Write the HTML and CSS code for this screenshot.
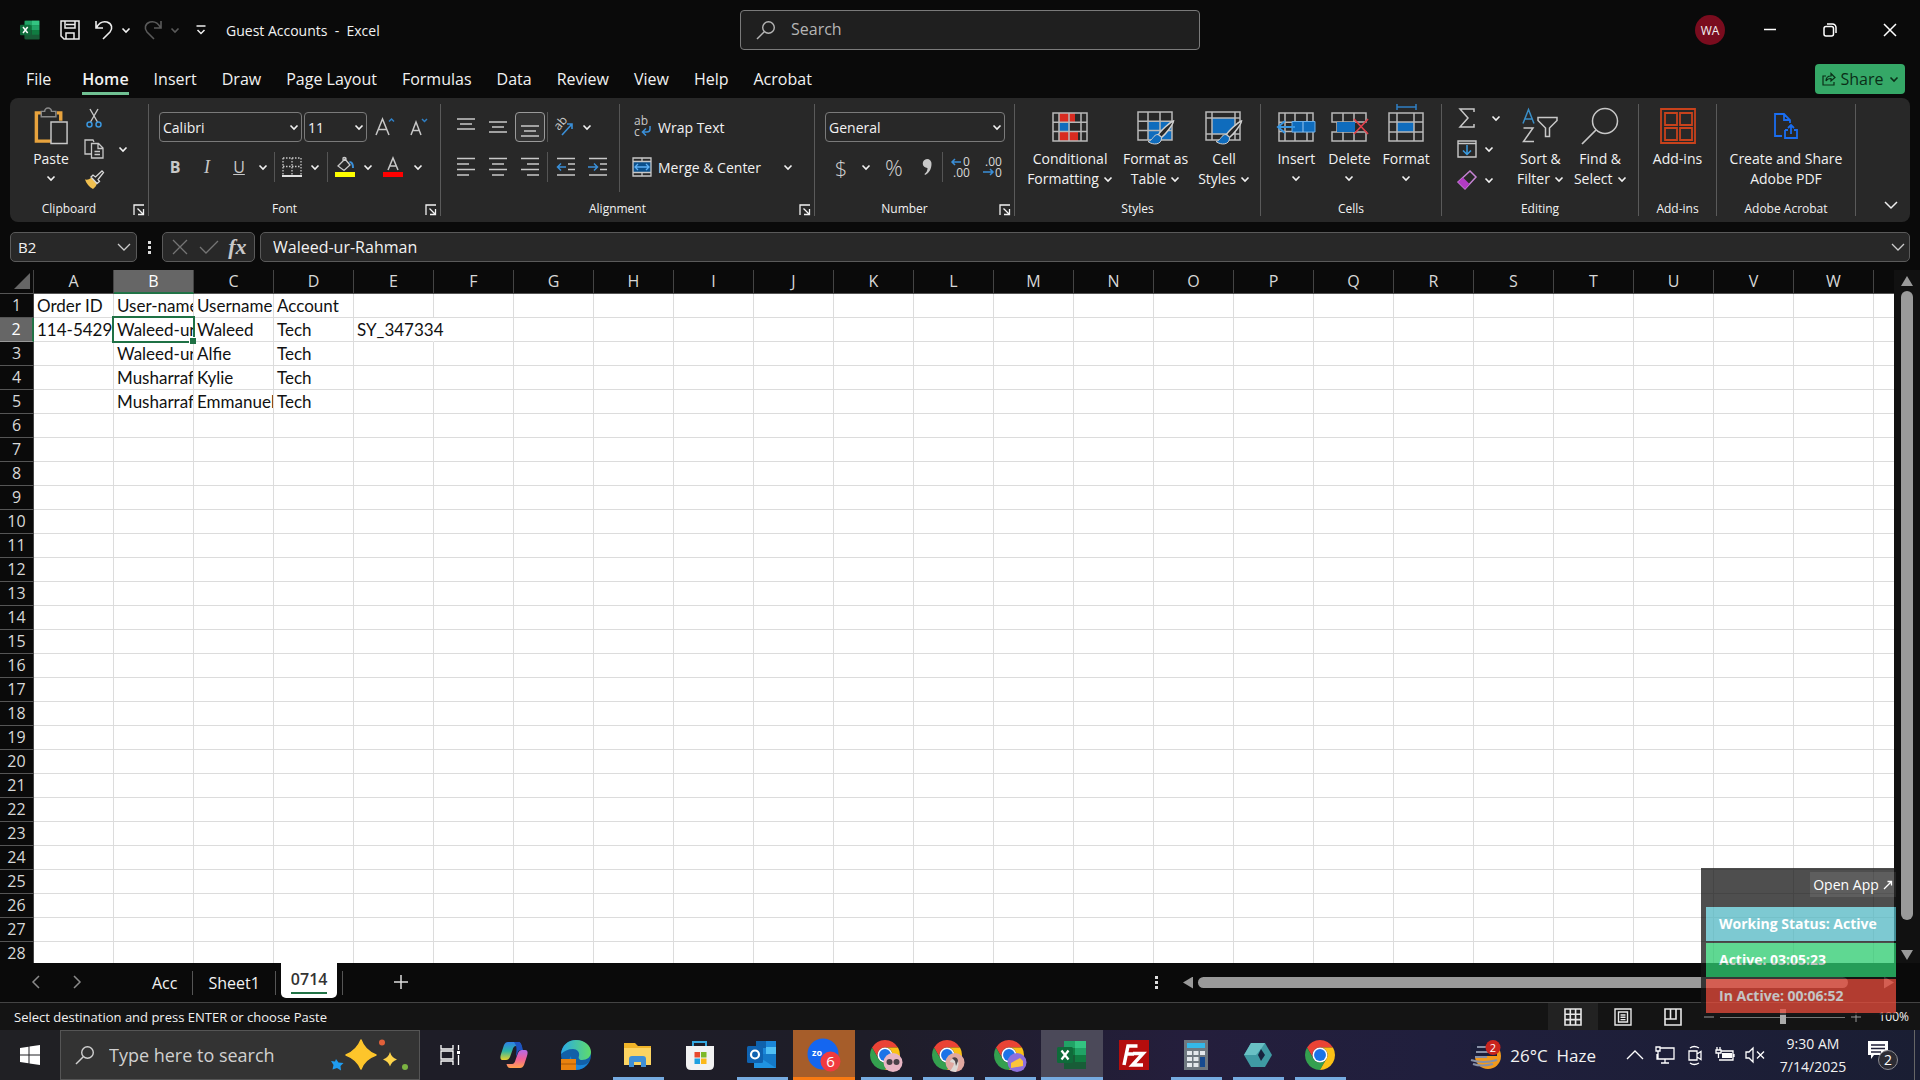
FILE: index.html
```html
<!DOCTYPE html>
<html lang="en">
<head>
<meta charset="utf-8">
<title>Guest Accounts - Excel</title>
<link rel="stylesheet" href="styles.css">
</head>
<body>
<svg class="defs" aria-hidden="true">
  <symbol id="chev" viewBox="0 0 10 10"><path d="M1.500 3.500 5 7l3.500-3.500" fill="none" stroke="currentColor" stroke-width="1.600"/></symbol>
  <symbol id="launch" viewBox="0 0 12 12"><path d="M1 11V1h10M4.500 4.500l5.500 5.500M10.500 5v5.500H5" fill="none" stroke="currentColor" stroke-width="1.300"/></symbol>
  <symbol id="mag" viewBox="0 0 20 20"><circle cx="12.500" cy="7.500" r="5.800" fill="none" stroke="currentColor" stroke-width="1.400"/><path d="M8.300 11.700 1 19" stroke="currentColor" stroke-width="1.500"/></symbol>
  <symbol id="xl" viewBox="0 0 30 30"><path d="M9 1h20v28H9a2 2 0 0 1-2-2V3a2 2 0 0 1 2-2z" fill="#107c41"/><path d="M18 1h11v7H18z" fill="#33c481"/><path d="M7 1h11v7H7zM18 8h11v7H18z" fill="#21a366"/><path d="M18 15h11v7H18z" fill="#107c41"/><path d="M7 15h11v7H7zM7 22h22v7H7z" fill="#185c37"/><rect y="7" width="16" height="16" rx="1.500" fill="#0f6b3a"/><path d="m4.500 10.500 7 9M11.500 10.500l-7 9" stroke="#fff" stroke-width="2.200"/></symbol>
  <symbol id="chrome" viewBox="0 0 48 48"><path d="M3.220 12A24 24 0 0 1 44.780 12H24A12 12 0 0 0 13.600 30Z" fill="#ea4335"/><path d="M3.220 12A24 24 0 0 0 24 48L34.400 30A12 12 0 0 1 13.600 30Z" fill="#34a04f"/><path d="M24 48A24 24 0 0 0 44.780 12H24A12 12 0 0 1 34.400 30Z" fill="#fbc116"/><circle cx="24" cy="24" r="12" fill="#fff"/><circle cx="24" cy="24" r="9.500" fill="#1a73e8"/></symbol>
  <symbol id="grid" viewBox="0 0 36 30"><path d="M1 1h34v28H1zM1 10.300h34M1 19.600h34M7 1v28M17 1v28M29 1v28" fill="none" stroke="#b8b8b8" stroke-width="1.500"/></symbol>
  <symbol id="brush" viewBox="0 0 28 26"><path d="M26.500 1c-4 1.500-13 10-15 13.500l3 3C18.500 14 26 5 26.500 1z" fill="#282828" stroke="#d0d0d0" stroke-width="1.500"/><path d="M11 14.500c-5 0-4.500 5.500-10 7 5 4 14 3.500 13.500-4z" fill="#0f6cbd" stroke="#d0d0d0" stroke-width="1"/></symbol>
</svg>

<header class="titlebar">
  <div class="quick">
    <svg class="s20" viewBox="0 0 30 30"><use href="#xl"/></svg>
    <button class="qsave" aria-label="Save"><svg class="s20" viewBox="0 0 20 20"><path d="M1 1h18v18H4l-3-3zM5 1v7h10V1M6 19v-6h8v6M6 4.500h9" fill="none" stroke="#eee" stroke-width="1.500"/></svg></button>
    <button class="qundo" aria-label="Undo"><svg class="s20" viewBox="0 0 20 20"><path d="M2 1v7h7M2.500 7.500C5 3 9 1 13 2c5 1.500 6 6.500 3 10l-7 7" fill="none" stroke="#eee" stroke-width="1.600"/></svg></button>
    <button class="dd" aria-label="Undo list"><svg><use href="#chev"/></svg></button>
    <button class="qundo dim" aria-label="Redo"><svg class="s20" viewBox="0 0 20 20"><path d="M18 1v7h-7M17.500 7.500C15 3 11 1 7 2 2 3.500 1 8.500 4 12l7 7" fill="none" stroke="currentColor" stroke-width="1.600"/></svg></button>
    <button class="dd dim" aria-label="Redo list"><svg><use href="#chev"/></svg></button>
    <button class="qmore" aria-label="Customize toolbar"><svg class="s12" viewBox="0 0 12 12"><path d="M1.500 2h9M2.500 6l3.500 3.500L9.500 6" fill="none" stroke="#eee" stroke-width="1.500"/></svg></button>
    <span class="doc">Guest Accounts&nbsp; -&nbsp; Excel</span>
  </div>
  <label class="find"><svg class="s20"><use href="#mag"/></svg><input type="text" placeholder="Search" aria-label="Search"></label>
  <div class="winctl">
    <button class="avatar">WA</button>
    <button class="win" aria-label="Minimize"><svg class="s14" viewBox="0 0 14 14"><path d="M1 6.500h12" stroke="#fff" stroke-width="1.500"/></svg></button>
    <button class="win" aria-label="Restore"><svg class="s14" viewBox="0 0 14 14"><rect x="1" y="3.500" width="9.500" height="9.500" rx="2" fill="none" stroke="#fff" stroke-width="1.500"/><path d="M4 1h5.500A3.500 3.500 0 0 1 13 4.500V10" fill="none" stroke="#fff" stroke-width="1.500"/></svg></button>
    <button class="win" aria-label="Close"><svg class="s14" viewBox="0 0 14 14"><path d="m1 1 12 12M13 1 1 13" stroke="#fff" stroke-width="1.500"/></svg></button>
  </div>
</header>

<nav class="tabs">
  <a href="#">File</a><a href="#" class="on">Home</a><a href="#">Insert</a><a href="#">Draw</a><a href="#">Page Layout</a><a href="#">Formulas</a><a href="#">Data</a><a href="#">Review</a><a href="#">View</a><a href="#">Help</a><a href="#">Acrobat</a>
  <button class="share"><svg class="s14" viewBox="0 0 14 14"><path d="M4 4H1v9h11v-3M4 9c0-3 2-5 5-5V1.500L13 5.500 9 9V6.500C7 6.500 5 7 4 9z" fill="none" stroke="#0a2e17" stroke-width="1.200"/></svg>Share<svg class="s10"><use href="#chev"/></svg></button>
</nav>

<section class="ribbon">
  <div class="group clip">
    <div class="body cols">
      <button class="big paste"><svg width="36" height="39" viewBox="0 0 36 39"><path d="M10 6H3v29h16M24 6h4v8" fill="none" stroke="#e8a33d" stroke-width="3.500"/><path d="M8 4.500h3.500a3.500 3.500 0 0 1 7 0H23V10H8z" fill="#282828" stroke="#8a8a8a" stroke-width="1.500"/><path d="M18 15.500h16.500v22H18z" fill="#282828" stroke="#c8c8c8" stroke-width="1.500"/></svg><span>Paste</span><svg class="s10"><use href="#chev"/></svg></button>
      <div class="stack">
        <button aria-label="Cut"><svg class="s20" viewBox="0 0 20 20"><path d="m6 1 7.500 13M14 1 6.500 14" stroke="#c8c8c8" stroke-width="1.400"/><circle cx="5.500" cy="16.500" r="2.500" fill="none" stroke="#3a96dd" stroke-width="1.500"/><circle cx="14.500" cy="16.500" r="2.500" fill="none" stroke="#3a96dd" stroke-width="1.500"/></svg></button>
        <button aria-label="Copy"><svg class="s20" viewBox="0 0 20 20"><path d="M7 15H1V1h8l1 2M7.500 4.500h7l4.500 4.500v10H7.500zM14 5v4.500h5M10.500 12.500h5.500M10.500 15.500h5.500" fill="none" stroke="#c8c8c8" stroke-width="1.300"/></svg></button>
        <button aria-label="Format Painter"><svg class="s20" viewBox="0 0 20 20"><path d="M1 9.500C4 10 6 9 7.500 7.500l5.500 6C12 16 11 17.500 9 19 5 17 2.500 13.500 1 9.500z" fill="#f0c050"/><path d="m7 7 2-2 2.500 2L18 1l1.500 1.500L14 9.500l1.500 2-2.500 2z" fill="#282828" stroke="#d8d8d8" stroke-width="1.300"/></svg></button>
      </div>
      <button class="dd" aria-label="Copy options"><svg><use href="#chev"/></svg></button>
    </div>
    <h2>Clipboard</h2><button class="launch" aria-label="Clipboard settings"><svg class="s12"><use href="#launch"/></svg></button>
  </div>

  <div class="group font">
    <div class="body rows">
      <div class="row near">
        <label class="combo face"><select aria-label="Font"><option>Calibri</option></select><svg class="s10"><use href="#chev"/></svg></label>
        <label class="combo size"><select aria-label="Font size"><option>11</option></select><svg class="s10"><use href="#chev"/></svg></label>
        <button class="ic" aria-label="Increase font size"><svg class="s20" viewBox="0 0 20 20"><path d="m1 18 6.500-16L14 18M3.500 12.500h8" fill="none" stroke="#c8c8c8" stroke-width="1.500"/><path d="m14 4.500 2.500-2.500L19 4.500" fill="none" stroke="#2f7fc4" stroke-width="1.500"/></svg></button>
        <button class="ic" aria-label="Decrease font size"><svg class="s20" viewBox="0 0 20 20"><path d="m2 18 5-13 5 13M4 13.500h6" fill="none" stroke="#c8c8c8" stroke-width="1.500"/><path d="m13 2 2.500 2.500L18 2" fill="none" stroke="#2f7fc4" stroke-width="1.500"/></svg></button>
      </div>
      <div class="row">
        <button class="ic t"><b>B</b></button><button class="ic t"><i>I</i></button><button class="ic t"><u>U</u></button><button class="dd" aria-label="Underline options"><svg><use href="#chev"/></svg></button><span class="sep"></span>
        <button class="ic narrow" aria-label="Borders"><svg class="s20" viewBox="0 0 20 20"><path d="M1 1h18v17M1 1v17M10 1v17M1 9.500h18" fill="none" stroke="#c8c8c8" stroke-width="1.300" stroke-dasharray="1.500 1.500"/><path d="M0 19h20" stroke="#e0e0e0" stroke-width="2"/></svg></button><button class="dd" aria-label="Border options"><svg><use href="#chev"/></svg></button><span class="sep"></span>
        <button class="ic narrow" aria-label="Fill color"><svg class="s20" viewBox="0 0 20 20"><path d="M3 9 10 2l5 6-6 5.500zM8 5V1.500C8 0 11 0 11 1.500V4" fill="none" stroke="#c8c8c8" stroke-width="1.300"/><path d="M14.500 5c3 0 3.500 3 3.500 6" fill="none" stroke="#3a8fd8" stroke-width="2"/><path d="M0 15h20v5H0z" fill="#ff0"/></svg></button><button class="dd" aria-label="Fill options"><svg><use href="#chev"/></svg></button>
        <button class="ic" aria-label="Font color"><svg class="s20" viewBox="0 0 20 20"><path d="m5 13 5-12 5 12M6.800 9h6.400" fill="none" stroke="#c8c8c8" stroke-width="1.500"/><path d="M0 15h20v5H0z" fill="#f00"/></svg></button><button class="dd" aria-label="Font color options"><svg><use href="#chev"/></svg></button>
      </div>
    </div>
    <h2>Font</h2><button class="launch" aria-label="Font settings"><svg class="s12"><use href="#launch"/></svg></button>
  </div>

  <div class="group align">
    <div class="body cols">
      <div class="rows">
        <div class="row">
          <button class="ic" aria-label="Top align"><svg class="s20" viewBox="0 0 20 20"><path d="M1 2h18M4 7h12M1 12h18" stroke="#c8c8c8" stroke-width="1.500"/></svg></button>
          <button class="ic" aria-label="Middle align"><svg class="s20" viewBox="0 0 20 20"><path d="M1 5h18M4 10h12M1 15h18" stroke="#c8c8c8" stroke-width="1.500"/></svg></button>
          <button class="ic pressed" aria-label="Bottom align"><svg class="s20" viewBox="0 0 20 20"><path d="M1 9h18M4 14h12M1 19h18" stroke="#c8c8c8" stroke-width="1.500"/></svg></button><span class="sep thin"></span>
          <button class="ic narrow" aria-label="Orientation"><svg class="s20" viewBox="0 0 20 20"><text x="0" y="0" transform="translate(5 14) rotate(-50)" font-size="12" fill="#c8c8c8">ab</text><path d="M8 18 18 7M13 7h5v5" fill="none" stroke="#3a8fd8" stroke-width="1.600"/></svg></button><button class="dd" aria-label="Orientation options"><svg><use href="#chev"/></svg></button>
        </div>
        <div class="row">
          <button class="ic" aria-label="Align left"><svg class="s20" viewBox="0 0 20 20"><path d="M1 1.500h18M1 7h12M1 12.500h18M1 18h12" stroke="#c8c8c8" stroke-width="1.500"/></svg></button>
          <button class="ic" aria-label="Center"><svg class="s20" viewBox="0 0 20 20"><path d="M1 1.500h18M4 7h12M1 12.500h18M4 18h12" stroke="#c8c8c8" stroke-width="1.500"/></svg></button>
          <button class="ic" aria-label="Align right"><svg class="s20" viewBox="0 0 20 20"><path d="M1 1.500h18M7 7h12M1 12.500h18M7 18h12" stroke="#c8c8c8" stroke-width="1.500"/></svg></button><span class="sep thin"></span>
          <button class="ic" aria-label="Decrease indent"><svg class="s20" viewBox="0 0 20 20"><path d="M1 1.500h18M12 7h7M12 12.500h7M1 18h18" stroke="#c8c8c8" stroke-width="1.500"/><path d="M10 10H2m3-3.500L1.500 10 5 13.500" fill="none" stroke="#3a8fd8" stroke-width="1.500"/></svg></button>
          <button class="ic" aria-label="Increase indent"><svg class="s20" viewBox="0 0 20 20"><path d="M1 1.500h18M12 7h7M12 12.500h7M1 18h18" stroke="#c8c8c8" stroke-width="1.500"/><path d="M0 10h9M6 6.500 9.500 10 6 13.500" fill="none" stroke="#3a8fd8" stroke-width="1.500"/></svg></button>
        </div>
      </div>
      <div class="rows wrapcol">
        <button class="row txt"><svg class="s20" viewBox="0 0 20 20"><text x="2" y="8" font-size="12" fill="#c8c8c8">ab</text><text x="2" y="19" font-size="12" fill="#c8c8c8">c</text><path d="M18 9v3c0 2-1 3-3 3h-4m3-3.500L10.500 15l3.500 3.500" fill="none" stroke="#3a8fd8" stroke-width="1.600"/></svg>Wrap Text</button>
        <div class="row"><button class="txt"><svg class="s20" viewBox="0 0 20 20"><path d="M1 4h18v12H1z" fill="#0b4f8a"/><path d="M1 1h18v18H1zM1 4.500h18M1 15.500h18M10 1v3.500M10 15.500V19" fill="none" stroke="#c8c8c8" stroke-width="1.300"/><path d="M3 10h14M6 7l-3 3 3 3M14 7l3 3-3 3" fill="none" stroke="#5db0f5" stroke-width="1.300"/></svg>Merge &amp; Center</button><button class="dd far" aria-label="Merge options"><svg><use href="#chev"/></svg></button></div>
      </div>
    </div>
    <h2>Alignment</h2><button class="launch" aria-label="Alignment settings"><svg class="s12"><use href="#launch"/></svg></button>
  </div>

  <div class="group number">
    <div class="body rows">
      <div class="row"><label class="combo"><select aria-label="Number format"><option>General</option></select><svg class="s10"><use href="#chev"/></svg></label></div>
      <div class="row">
        <button class="ic g">$</button><button class="dd" aria-label="Currency options"><svg><use href="#chev"/></svg></button><button class="ic g pct">%</button>
        <button class="ic narrow" aria-label="Comma style"><svg class="s20" viewBox="0 0 20 20"><path d="M10 2a4.500 4.500 0 0 1 4.500 5c0 5-2.500 9-6.500 11l-.5-1c2-1.500 3-3.500 3-6A4.500 4.500 0 1 1 10 2z" fill="#c8c8c8"/></svg></button><span class="sep thin"></span>
        <button class="ic" aria-label="Increase decimal"><svg class="s20" viewBox="0 0 20 20"><text x="12" y="9" font-size="12" fill="#d8d8d8">0</text><text x="2" y="20" font-size="12" fill="#d8d8d8">.00</text><path d="M10 5H1m3-3L1 5l3 3" fill="none" stroke="#3a8fd8" stroke-width="1.500"/></svg></button>
        <button class="ic" aria-label="Decrease decimal"><svg class="s20" viewBox="0 0 20 20"><text x="2" y="9" font-size="12" fill="#d8d8d8">.00</text><text x="12" y="20" font-size="12" fill="#d8d8d8">0</text><path d="M0 15h10M7 12l3 3-3 3" fill="none" stroke="#3a8fd8" stroke-width="1.500"/></svg></button>
      </div>
    </div>
    <h2>Number</h2><button class="launch" aria-label="Number settings"><svg class="s12"><use href="#launch"/></svg></button>
  </div>

  <div class="group styles">
    <div class="body cols bigs">
      <button class="big"><svg width="36" height="34" viewBox="0 0 36 34"><g transform="translate(0 3)"><path d="M7 1h16v9H7zM7 20h19v9H7z" fill="#d92b20"/><path d="M7 10h11v10H7z" fill="#0f6cbd"/><use href="#grid" width="36" height="30"/></g></svg><span>Conditional<br>Formatting<svg class="s10"><use href="#chev"/></svg></span></button>
      <button class="big"><svg width="40" height="38" viewBox="0 0 40 38"><g transform="translate(1 4)"><path d="M11 10h24v19H11z" fill="#0f6cbd"/><path d="M1 1h34v28H1zM1 10.300h34M1 19.600h34M11 1v28M23 1v28" fill="none" stroke="#b8b8b8" stroke-width="1.500"/><use href="#brush" x="10" y="9" width="28" height="26"/></g></svg><span>Format as<br>Table<svg class="s10"><use href="#chev"/></svg></span></button>
      <button class="big"><svg width="40" height="38" viewBox="0 0 40 38"><g transform="translate(1 4)"><path d="M7 7h23v16H7z" fill="#0f6cbd"/><path d="M1 1h34v28H1zM1 7h34M1 23h34M7 1v28M30 1v28" fill="none" stroke="#b8b8b8" stroke-width="1.500"/><use href="#brush" x="10" y="9" width="28" height="26"/></g></svg><span>Cell<br>Styles<svg class="s10"><use href="#chev"/></svg></span></button>
    </div>
    <h2>Styles</h2>
  </div>

  <div class="group cells">
    <div class="body cols bigs">
      <button class="big two"><svg width="40" height="34" viewBox="0 0 40 34"><g transform="translate(2 3)"><use href="#grid" width="36" height="30"/><path d="M14 9.500h23v10.500H14z" fill="#0f6cbd" stroke="#6aaee8"/><path d="M25 10v10" stroke="#9cc8f0"/><path d="M17 15H0M7 9l-7 6 7 6" fill="none" stroke="#3a96e0" stroke-width="2"/></g></svg><span>Insert</span><svg class="s10"><use href="#chev"/></svg></button>
      <button class="big two"><svg width="40" height="34" viewBox="0 0 40 34"><g transform="translate(2 3)"><path d="M1 1h34v9H1zM1 20h34v9H1zM12 1v9M23 1v9M12 20v9M23 20v9M1 10h5v10H1" fill="none" stroke="#b8b8b8" stroke-width="1.500"/><path d="M6 10h18v10H6z" fill="#0f6cbd"/><path d="m23 7 14 15M37 7 23 22" stroke="#e0404a" stroke-width="1.700"/></g></svg><span>Delete</span><svg class="s10"><use href="#chev"/></svg></button>
      <button class="big two"><svg width="36" height="38" viewBox="0 0 36 38"><path d="M9 0h19M9-3v6M28-3v6" stroke="#2f7fc4" stroke-width="1.500"/><g transform="translate(0 5)"><path d="M9 10h17v10H9z" fill="#0f6cbd"/><path d="M1 1h34v28H1zM1 10h34M1 20h34M9 1v28M26 1v28" fill="none" stroke="#b8b8b8" stroke-width="1.500"/></g></svg><span>Format</span><svg class="s10"><use href="#chev"/></svg></button>
    </div>
    <h2>Cells</h2>
  </div>

  <div class="group editing">
    <div class="body cols">
      <div class="stack pair">
        <div class="row"><button aria-label="AutoSum"><svg class="s20" viewBox="0 0 20 20"><path d="M17 4V1H3l8 9-8 9h14v-3" fill="none" stroke="#c8c8c8" stroke-width="1.500"/></svg></button><button class="dd wide" aria-label="AutoSum options"><svg><use href="#chev"/></svg></button></div>
        <div class="row"><button aria-label="Fill"><svg class="s20" viewBox="0 0 20 20"><path d="M1 2h18v16H1zM1 4.500h18" fill="none" stroke="#c8c8c8" stroke-width="1.400"/><path d="M10 6v9M6 11.500l4 4 4-4" fill="none" stroke="#3a9be0" stroke-width="1.500"/></svg></button><button class="dd" aria-label="Fill options"><svg><use href="#chev"/></svg></button></div>
        <div class="row"><button aria-label="Clear"><svg class="s20" viewBox="0 0 20 20"><path d="m1 12 12-11 6 6L8 19z" fill="none" stroke="#c583d3" stroke-width="1.500"/><path d="m1 12 5-4.500 6.500 6.500L8 19z" fill="#b23bc4"/></svg></button><button class="dd" aria-label="Clear options"><svg><use href="#chev"/></svg></button></div>
      </div>
      <button class="big"><svg width="36" height="37" viewBox="0 0 36 37"><path d="m1 16 5.500-14L12 16M3 11.500h7" fill="none" stroke="#3a8fc8" stroke-width="1.500"/><path d="M1.500 20.500H11L1.500 34H12" fill="none" stroke="#c8c8c8" stroke-width="1.500"/><path d="M16 10h19v3l-7.500 7.500V29h-4v-8.500L16 13z" fill="none" stroke="#c8c8c8" stroke-width="1.500"/></svg><span>Sort &amp;<br>Filter<svg class="s10"><use href="#chev"/></svg></span></button>
      <button class="big"><svg width="38" height="38" viewBox="0 0 38 38"><circle cx="24" cy="14" r="12.500" fill="none" stroke="#c8c8c8" stroke-width="1.500"/><path d="M15 23 1 37" stroke="#c8c8c8" stroke-width="1.700"/></svg><span>Find &amp;<br>Select<svg class="s10"><use href="#chev"/></svg></span></button>
    </div>
    <h2>Editing</h2>
  </div>

  <div class="group addins">
    <div class="body cols"><button class="big"><svg width="36" height="36" viewBox="0 0 36 36"><path d="M1 1h34v34H1zM5 5h12v12H5zM20 5h12v12H20zM5 20h12v12H5zM20 20h12v12H20z" fill="none" stroke="#c8421c" stroke-width="1.800"/></svg><span>Add-ins</span></button></div>
    <h2>Add-ins</h2>
  </div>

  <div class="group acro">
    <div class="body cols"><button class="big"><svg width="24" height="32" viewBox="0 0 24 32"><path d="M8 26H1V4h9l6 6v3M10 4v6h6M11 20v8h12v-8h-3M14 20h-3M17 24v-9M14 18l3-3 3 3" fill="none" stroke="#1a6df0" stroke-width="1.800"/></svg><span>Create and Share<br>Adobe PDF</span></button></div>
    <h2>Adobe Acrobat</h2>
  </div>
  <button class="collapse" aria-label="Collapse ribbon"><svg class="s14" viewBox="0 0 14 14"><path d="m1 4 6 6 6-6" fill="none" stroke="#eee" stroke-width="1.500"/></svg></button>
</section>

<div class="formula">
  <label class="namebox"><input type="text" value="B2" aria-label="Name box"><svg class="s14" viewBox="0 0 14 14"><path d="m1 4 6 6 6-6" fill="none" stroke="#ccc" stroke-width="1.300"/></svg></label>
  <span class="dots"></span>
  <div class="fx"><button aria-label="Cancel"><svg class="s20" viewBox="0 0 20 20"><path d="m3 3 14 14M17 3 3 17" stroke="#757575" stroke-width="1.300"/></svg></button><button aria-label="Enter"><svg class="s20" viewBox="0 0 20 20"><path d="m1 10 6 6L19 4" fill="none" stroke="#757575" stroke-width="1.300"/></svg></button><button class="fn">fx</button></div>
  <label class="fbar"><input type="text" value="Waleed-ur-Rahman" aria-label="Formula bar"><svg class="s14" viewBox="0 0 14 14"><path d="m1 4 6 6 6-6" fill="none" stroke="#ccc" stroke-width="1.300"/></svg></label>
</div>

<main class="sheet">
  <div class="cellsview"><table class="gridtable"><thead></thead><tbody></tbody></table></div>
  <div class="vscroll"><button class="up" aria-label="Scroll up"></button><div class="track"></div><button class="down" aria-label="Scroll down"></button></div>
</main>

<div class="sheettabs">
  <button class="nav" aria-label="Previous sheet"><svg class="s14" viewBox="0 0 14 14"><path d="M10 1 4 7l6 6" fill="none" stroke="#8a8a8a" stroke-width="1.500"/></svg></button>
  <button class="nav" aria-label="Next sheet"><svg class="s14" viewBox="0 0 14 14"><path d="m4 1 6 6-6 6" fill="none" stroke="#8a8a8a" stroke-width="1.500"/></svg></button>
  <button class="st first">Acc</button><button class="st">Sheet1</button><button class="st active"><span>0714</span></button><i class="bar"></i>
  <button class="add" aria-label="New sheet"><svg class="s14" viewBox="0 0 14 14"><path d="M7 0v14M0 7h14" stroke="#ddd" stroke-width="1.500"/></svg></button>
  <div class="hscroll"><span class="dots"></span><button class="left" aria-label="Scroll left"></button><div class="track"></div><button class="right" aria-label="Scroll right"></button></div>
</div>

<div class="status">
  <span>Select destination and press ENTER or choose Paste</span>
  <div class="views">
    <button class="on" aria-label="Normal"><svg width="18" height="18" viewBox="0 0 18 18"><path d="M1 1h16v16H1zM1 6.300h16M1 11.600h16M6.300 1v16M11.600 1v16" fill="none" stroke="#e8e8e8" stroke-width="1.600"/></svg></button>
    <button aria-label="Page Layout"><svg width="18" height="18" viewBox="0 0 18 18"><path d="M1 1h16v16H1zM4.500 4h9v10h-9zM6.500 7h5M6.500 9.300h5M6.500 11.600h5" fill="none" stroke="#e8e8e8" stroke-width="1.400"/></svg></button>
    <button aria-label="Page Break"><svg width="18" height="18" viewBox="0 0 18 18"><path d="M1 1h16v16H1zM1 11h11V1M6.500 1v10" fill="none" stroke="#e8e8e8" stroke-width="1.600"/></svg></button>
  </div>
  <button class="zb" aria-label="Zoom out"><svg class="s10" viewBox="0 0 10 10"><path d="M0 5h10" stroke="#999"/></svg></button><input class="zoom" type="range" aria-label="Zoom"><button class="zb" aria-label="Zoom in"><svg class="s10" viewBox="0 0 10 10"><path d="M0 5h10M5 0v10" stroke="#999"/></svg></button><span class="pc">100%</span>
</div>

<footer class="taskbar">
  <button class="start" aria-label="Start"><svg class="s20" viewBox="0 0 20 20"><path d="m0 3 8.500-1.200v7.700H0zM9.500 1.600 20 0v9.500H9.500zM0 10.500h8.500v7.700L0 17zM9.500 10.500H20V20L9.500 18.400z" fill="#fff"/></svg></button>
  <label class="tsearch"><svg class="s20"><use href="#mag"/></svg><input type="text" placeholder="Type here to search" aria-label="Type here to search"><svg width="78" height="32" viewBox="0 0 78 32"><path d="M31 1q3.500 10.500 15 15-11.500 4-15 14-4-10-15-14Q27 11.500 31 1z" fill="#fdc52b" stroke="#fdc52b" stroke-width="1.500" stroke-linejoin="round"/><path d="M60 13q1.500 5.500 7 7.500-5.500 2-7 7-1.500-5-7-7 5.500-2 7-7.500z" fill="#fdd34a"/><path d="m6 20 2.500 3.500 5 .5-3 3 .5 4.500L7 29l-4.500 1.500 1-4.500L1 22l4 .5z" fill="#1f9cf0"/><circle cx="52" cy="3.500" r="3" fill="#e2603a"/><circle cx="75" cy="28" r="3" fill="#7cb342"/></svg></label>
  <button class="app tv" aria-label="Task view"><svg class="s20" viewBox="0 0 20 20"><path d="M1 0v4h12V0M1 20v-4h12v4M1 6h12v8H1zM18.500 0v5M18.500 10v10" fill="none" stroke="#fff" stroke-width="1.300"/><path d="M17 6h3v3h-3z" fill="#fff"/></svg></button>
  <button class="app" aria-label="Copilot"><svg class="s30" viewBox="0 0 30 30"><defs><linearGradient id="c1" x2="0" y2="1"><stop stop-color="#2f80e8"/><stop offset=".5" stop-color="#2bb5a5"/><stop offset="1" stop-color="#e8d22c"/></linearGradient><linearGradient id="c2" x2="0" y2="1"><stop stop-color="#b46ae8"/><stop offset=".5" stop-color="#f0609a"/><stop offset="1" stop-color="#ffa24c"/></linearGradient></defs><path d="M9 2h10c2 0 3 2 3.500 4H17c-2 0-3 2-3.500 4L11 17c-1 2-2 3-4 3H4c-3 0-3-3-2-6l3-9c1-2 2-3 4-3z" fill="url(#c1)"/><path d="M21 28H11c-2 0-3-2-3.500-4H13c2 0 3-2 3.500-4L19 13c1-2 2-3 4-3h3c3 0 3 3 2 6l-3 9c-1 2-2 3-4 3z" fill="url(#c2)"/><path d="M17 2h3c2 0 3 4 4 8h-2c-2 0-3 1-3.500 3l-1.500 4c0-5 2-10-2-15z" fill="#1d53c0"/></svg></button>
  <button class="app" aria-label="Edge"><svg class="s30" viewBox="0 0 30 30"><defs><linearGradient id="e1"><stop stop-color="#2aa9e8"/><stop offset="1" stop-color="#5fdc6a"/></linearGradient></defs><circle cx="15" cy="15" r="15" fill="#1260a8"/><path d="M0 14C1 5 7 0 15 0c9 0 15 6 15 12 0 5-4 8-9 8-3 0-4-2-3-4 1-4-2-7-6-7-5 0-9 2-12 5z" fill="url(#e1)"/><path d="M10 16c0 6 5 10 11 9 3 0 5-1 7-3-3 5-8 8-13 8-6-1-9-8-5-14z" fill="#1b86d8"/><rect y="19" width="15" height="11" fill="#e8820e"/><path d="M0 24h15" stroke="#a85808"/></svg></button>
  <button class="app run" aria-label="File Explorer"><svg class="s30" viewBox="0 0 30 30"><path d="M1 3h11l3 3h13v19H1z" fill="#f0b429"/><path d="M1 8h27v17H1z" fill="#fcd462"/><path d="M6 27V19q0-3 3-3h11q3 0 3 3v8h-5v-5h-7v5z" fill="#3f8fd6"/></svg></button>
  <button class="app" aria-label="Store"><svg class="s30" viewBox="0 0 30 30"><path d="M8 8V2h13v6" fill="none" stroke="#35a8e0" stroke-width="2"/><path d="M1 6h28v19q0 5-5 5H6q-5 0-5-5z" fill="#f2f2f2"/><path d="M9.500 12H15v5.500H9.500z" fill="#e8482c"/><path d="M16 12h5.500v5.500H16z" fill="#7db928"/><path d="M9.500 18.500H15V24H9.500z" fill="#1ea0e0"/><path d="M16 18.500h5.500V24H16z" fill="#fbb91a"/></svg></button>
  <button class="app run" aria-label="Outlook"><svg class="s30" viewBox="0 0 30 30"><path d="M9 1h20v13H9z" fill="#1a86d8"/><path d="M9 1h10v7H9z" fill="#0f62ac"/><path d="M19 7h10v7H19z" fill="#50c0f4"/><path d="M7 14h22v14H7z" fill="#1479c8"/><path d="m7 14 22 14H7z" fill="#1f93e2"/><rect y="6" width="16" height="17" rx="1.500" fill="#0f62b0"/><circle cx="8" cy="14.500" r="4" fill="none" stroke="#fff" stroke-width="2.200"/></svg></button>
  <button class="app alert" aria-label="Zoom"><svg class="s34" viewBox="0 0 34 34"><circle cx="16" cy="16" r="15.500" fill="#1466f0"/><text x="5" y="18" font-size="9" font-weight="bold" fill="#fff">zo</text><circle cx="23.500" cy="23.500" r="10" fill="#f03a3e"/><text x="23.500" y="29" font-size="15" text-anchor="middle" fill="#fff">6</text></svg></button>
  <button class="app run" aria-label="Chrome profile 1"><svg class="s34" viewBox="0 0 34 34"><use href="#chrome" x="1" y="2" width="30" height="30"/><circle cx="24" cy="24.500" r="9.500" fill="#e8b6c4"/><circle cx="20.500" cy="24" r="3" fill="#4a4248"/><circle cx="27.500" cy="24" r="3" fill="#4a4248"/></svg></button>
  <button class="app run" aria-label="Chrome profile 2"><svg class="s34" viewBox="0 0 34 34"><use href="#chrome" x="1" y="2" width="30" height="30"/><circle cx="24" cy="24.500" r="9.500" fill="#e0a8a0"/><path d="M19 33c2-3 4-5 4-8l-4-1c0-3 5-4 7-2 3 2 1 8-1 12z" fill="#ddd8d4"/><path d="M21 20c3-2 6 0 6 3l-2 5-1-5z" fill="#4d4448"/></svg></button>
  <button class="app run" aria-label="Chrome profile 3"><svg class="s34" viewBox="0 0 34 34"><use href="#chrome" x="1" y="2" width="30" height="30"/><circle cx="24" cy="24.500" r="9.500" fill="#8d6fdc"/><path d="m18 25 9-5 3 3v5l-12 2z" fill="#fbc43a"/></svg></button>
  <button class="app focus" aria-label="Excel"><svg class="s30" viewBox="0 0 30 30"><use href="#xl"/></svg></button>
  <button class="app" aria-label="FileZilla"><svg class="s30" viewBox="0 0 30 30"><path d="M0 0h30v30H0z" fill="#b50d0d"/><path d="M5 25 9 6h9.500M7 14h8M14 13.500h10L13.500 25H24" fill="none" stroke="#fff" stroke-width="3.500"/></svg></button>
  <button class="app run" aria-label="Calculator"><svg width="24" height="30" viewBox="0 0 24 30"><path d="M0 0h24v30H0z" fill="#6f7880"/><path d="M3 3h18v5H3z" fill="#35b8e8"/><path d="M3 11h5v4H3zM9.500 11h5v4h-5zM16 11h5v4h-5zM3 17h5v4H3zM9.500 17h5v4h-5zM3 23h5v4H3zM9.500 23h5v4h-5z" fill="#e4e8ec"/><path d="M16 17h5v10h-5z" fill="#164a90"/></svg></button>
  <button class="app run" aria-label="Tracker"><svg class="s30" viewBox="0 0 30 30"><path d="M8 3h14l7 12-7 12H8L1 15z" fill="#3f9aa3"/><path d="m8 3-7 12h12l5-6 4-6z" fill="#69c0c4"/><path d="m18 9 4 6-4 6-3-6z" fill="#17233f"/></svg></button>
  <button class="app run" aria-label="Chrome"><svg class="s30"><use href="#chrome"/></svg></button>
  <div class="tray">
    <button class="weather"><svg class="s30" viewBox="0 0 30 30"><circle cx="17" cy="16" r="13" fill="#f29a1c"/><path d="M0 3h26v13H0z" fill="#1b1e3a"/><path d="M6 7h12M5 12h12M4 17h12M0 20q12 4 26 0M2 24q8 3 20 0" fill="none" stroke="#8790a5" stroke-width="2"/><circle cx="22" cy="7.500" r="7.500" fill="#c9241d"/><text x="22" y="12" font-size="11" text-anchor="middle" fill="#fff">2</text></svg>26°C&nbsp; Haze</button>
    <button aria-label="Show hidden icons"><svg class="s20" viewBox="0 0 20 20"><path d="m2 14 8-8 8 8" fill="none" stroke="#fff" stroke-width="1.300"/></svg></button>
    <button aria-label="Display"><svg class="s20" viewBox="0 0 20 20"><path d="M5 3h14v11H2V9M10 14v4M6 18h8M1 2h4v4H1zM3 6v8" fill="none" stroke="#fff" stroke-width="1.300"/></svg></button>
    <button aria-label="Camera"><svg class="s20" viewBox="0 0 20 20"><path d="M4 6h8v9H4zM12 9l4-2.500v8L12 12M5 3q4-3 9 0M5 18q4 3 9 0" fill="none" stroke="#fff" stroke-width="1.300"/></svg></button>
    <button aria-label="Battery"><svg class="s20" viewBox="0 0 20 20"><path d="M6 6h12v9H4M19 9v3M2 2v3M5 2v3M1 5h5v3H1zM3.500 8v5" fill="none" stroke="#fff" stroke-width="1.300"/><path d="M7 8h10v5H7z" fill="#fff"/></svg></button>
    <button aria-label="Sound"><svg class="s20" viewBox="0 0 20 20"><path d="M1 7h3l4-4v14l-4-4H1zM12 6.500l7 7M19 6.500l-7 7" fill="none" stroke="#fff" stroke-width="1.300"/></svg></button>
    <button class="clock">9:30 AM<br>7/14/2025</button>
    <button class="note" aria-label="Notifications"><svg class="s30" viewBox="0 0 30 30"><path d="M0 1h20v14H6l-3 4v-4H0z" fill="#fff"/><path d="M3 5h14M3 8.500h14M3 12h10" stroke="#20213a" stroke-width="1.500"/><circle cx="20" cy="20" r="9.500" fill="#2c2c34" stroke="#8a8a90"/><text x="20" y="25" font-size="14" text-anchor="middle" fill="#fff">2</text></svg></button>
  </div>
</footer>

<aside class="widget">
  <button>Open App <svg class="s10" viewBox="0 0 10 10"><path d="m1 9 7-7M4.500 1.500h4v4" fill="none" stroke="#fff" stroke-width="1.300"/></svg></button>
  <p class="blue">Working Status: Active</p>
  <p class="green">Active: 03:05:23</p>
  <p class="red">In Active: 00:06:52</p>
</aside>
<script src="script.js"></script>
</body>
</html>
```
FILE: styles.css
```css
* { box-sizing: border-box; }
body { margin: 0; height: 100vh; display: flex; flex-direction: column; overflow: hidden; position: relative; background: #0a0a0a; color: #f2f2f2; font: 16px "Open Sans", "Noto Sans", sans-serif; }
button, input, select { font: inherit; color: inherit; background: none; border: 0; padding: 0; margin: 0; outline: 0; }
button { display: inline-flex; align-items: center; justify-content: center; white-space: nowrap; }
input { min-width: 0; }
svg { display: block; flex: none; overflow: visible; }
.defs { position: absolute; width: 0; height: 0; }
.s10, .dd svg { width: 10px; height: 10px; }
.s12 { width: 12px; height: 12px; }
.s14 { width: 14px; height: 14px; }
.s20 { width: 20px; height: 20px; }
.s30 { width: 30px; height: 30px; }
.s34 { width: 34px; height: 34px; }
.dim { color: #5a5a5a; }
.dd { width: 18px; height: 30px; }

/* title bar */
.titlebar { height: 60px; flex: none; display: grid; grid-template-columns: 1fr 460px 1fr; align-items: center; padding-left: 20px; }
.quick { display: flex; align-items: center; }
.qsave { margin-left: 20px; }
.qundo { margin-left: 14px; }
.dd + .qundo { margin-left: 8px; }
.qundo + .dd { margin-left: 3px; }
.qmore { width: 30px; margin-left: 2px; }
.doc { font-size: 14px; margin-left: 10px; }
.find { display: flex; align-items: center; height: 40px; padding: 0 15px; gap: 15px; background: #1f1f1f; border: 1px solid #7a7a7a; border-radius: 4px; color: #b5b5b5; }
.find input { flex: 1; font-size: 16px; line-height: 22px; padding-bottom: 2px; }
input::placeholder { color: inherit; opacity: 1; }
.winctl { display: flex; justify-content: flex-end; align-items: center; }
.avatar { width: 30px; height: 30px; border-radius: 50%; background: #7a0c1e; font-size: 12px; margin-right: 15px; }
.win { width: 60px; height: 60px; }

/* ribbon tabs */
.tabs { height: 38px; flex: none; display: flex; align-items: flex-start; gap: 25px; padding: 4px 15px 0 26px; }
.tabs a { color: inherit; text-decoration: none; line-height: 31px; height: 31px; font-size: 16px; }
.tabs a.on { font-weight: 600; border-bottom: 3px solid #6fc092; margin-left: 6px; }
.share { margin-left: auto; height: 30px; width: 90px; gap: 5px; background: #35a867; border-radius: 4px; color: #0a2e17; font-size: 16px; }

/* ribbon */
.ribbon { flex: none; height: 124px; margin: 0 10px; display: flex; background: #282828; border-radius: 8px; padding: 6px 0; }
.group { position: relative; display: flex; flex-direction: column; flex: none; border-right: 1px solid #5a5a5a; height: 112px; }
.group h2 { margin: 0; font-size: 12px; font-weight: 400; line-height: 16px; text-align: center; }
.clip h2, .font h2, .align h2, .number h2 { padding-right: 20px; }
.body { height: 97px; flex: none; }
.launch { position: absolute; right: 3px; bottom: 0; }
.cols { display: flex; }
.rows { display: flex; flex-direction: column; gap: 10px; padding-top: 8px; }
.row { display: flex; align-items: center; height: 30px; }
.near { gap: 2px; }
.ic { width: 32px; height: 30px; }
.narrow { width: 28px; }
.t { font-size: 16px; color: #c8c8c8; }
.t + .dd { width: 16px; }
.t i { font-family: "Liberation Serif", serif; font-size: 18px; }
.g { font-size: 22px; font-weight: 300; color: #d0d0d0; }
.pct { width: 38px; }
.pressed { border: 1px solid #9a9a9a; border-radius: 4px; background: #333; width: 30px; margin: 0 1px; }
.sep { width: 1px; height: 30px; background: #555; margin: 0 3px; }
.thin { margin: 0 2px 0 1px; }
.combo { display: grid; align-items: center; height: 30px; width: 180px; border: 1px solid #7a7a7a; border-radius: 4px; }
.combo > * { grid-area: 1 / 1; }
.combo select { appearance: none; width: 100%; padding-left: 3px; font-size: 14px; }
.combo svg { justify-self: end; margin-right: 2px; }
.face { width: 143px; }
.size { width: 63px; }
.big { flex-direction: column; justify-content: flex-start; font-size: 14px; line-height: 20px; }
.big > svg:first-child { height: 38px; margin: 3px 0 4px; }
.big span { display: block; text-align: center; }
.big span svg { display: inline-block; margin-left: 4px; }
.big > svg.s10 { margin-top: 4px; }
.stack { display: flex; flex-direction: column; justify-content: space-between; padding: 4px 0 6px; height: 92px; }
.clip { width: 139px; }
.paste { width: 54px; margin-left: 14px; }
.clip .stack { margin-left: 6px; }
.clip .cols > .dd { margin: 30px 0 0 10px; }
.font { width: 292px; }
.font .rows { padding-left: 10px; }
.align { width: 374px; }
.align .cols > .rows:first-child { width: 178px; padding-left: 9px; }
.align .wrapcol { padding-left: 12px; border-left: 1px solid #555; height: 88px; }
.txt { gap: 6px; font-size: 14px; justify-content: flex-start; }
.far { margin-left: 18px; }
.number { width: 200px; }
.number .rows { padding-left: 10px; }
.styles { width: 246px; }
.styles .bigs { justify-content: center; gap: 10px; padding-left: 2px; }
.cells { width: 181px; }
.cells .bigs { justify-content: center; gap: 12px; padding-left: 4px; }
.editing { width: 197px; }
.editing .stack { margin: 0 14px 0 15px; width: 46px; }
.editing .row { height: 20px; }
.editing .dd { margin-left: 3px; }
.editing .dd.wide { margin-left: 11px; }
.editing .big + .big { margin-left: 10px; }
.addins { width: 78px; }
.acro { width: 139px; }
.addins .cols, .acro .cols { justify-content: center; }
.collapse { margin: 86px 12px 0 auto; height: 30px; }

/* formula bar */
.formula { flex: none; display: flex; height: 30px; margin: 10px 10px 8px; }
.formula label, .fx { display: flex; align-items: center; background: #282828; border: 1px solid #5a5a5a; border-radius: 5px; }
.formula input { flex: 1; font-size: 15px; }
.namebox { width: 127px; padding: 0 5px 0 7px; }
.dots { width: 3px; height: 13px; background: repeating-linear-gradient(#ddd 0 3px, transparent 3px 5px); }
.formula .dots { margin: 9px 11px 0; }
.fx { width: 93px; justify-content: space-around; padding: 0 3px; }
.fn { font: italic bold 22px "Liberation Serif", serif; color: #c8c8c8; }
.fbar { flex: 1; margin-left: 5px; padding: 0 4px 0 12px; }
.formula .fbar input { font-size: 16px; }

/* worksheet */
.sheet { flex: 1; min-height: 0; display: flex; }
.cellsview { flex: 1; min-width: 0; overflow: hidden; background: #fff; }
.gridtable { border-collapse: separate; border-spacing: 0; table-layout: fixed; width: 1954px; color: #111; }
.gridtable th { background: #0a0a0a; color: #d8d8d8; font-weight: 400; font-size: 16px; line-height: 23px; height: 24px; padding: 0; width: 80px; border-right: 1px solid #444; border-bottom: 1px solid #555; }
.gridtable th:first-child { width: 34px; }
.gridtable td { height: 24px; padding: 0 0 0 3px; font: 17px/23px Lato, "Open Sans", sans-serif; border-right: 1px solid #dcdcdc; border-bottom: 1px solid #dcdcdc; overflow: hidden; white-space: nowrap; }
.gridtable thead .hot { background: #666; color: #fff; line-height: 22px; border-bottom: 2px solid #217346; }
.gridtable tbody .hot { background: #666; color: #fff; border-bottom: 1px solid #999; border-right: 2px solid #217346; }
.gridtable .spill { overflow: visible; border-right-color: transparent; }
.gridtable .sel { position: relative; overflow: visible; }
.sel span { display: block; overflow: hidden; }
.sel::before { content: ""; position: absolute; inset: -2px; border: 2px solid #1f7145; }
.sel::after { content: ""; position: absolute; right: -3px; bottom: -3px; width: 6px; height: 6px; background: #1f7145; border: 1px solid #fff; border-width: 1px 0 0 1px; }
.corner { display: block; width: 16px; height: 16px; margin: 3px 0 4px 14px; background: #666; clip-path: polygon(100% 0, 100% 100%, 0 100%); }
.vscroll { width: 26px; display: flex; flex-direction: column; align-items: center; padding: 6px 0 3px; background: #111; }
.up, .down { width: 12px; height: 10px; background: #9a9a9a; }
.up { clip-path: polygon(50% 0, 100% 100%, 0 100%); }
.down { clip-path: polygon(0 0, 100% 0, 50% 100%); }
.vscroll .track { flex: 1; width: 12px; margin: 5px 0 30px; background: #9a9a9a; border-radius: 6px; }

/* sheet tabs */
.sheettabs { flex: none; height: 40px; display: flex; align-items: flex-start; padding-left: 15px; border-bottom: 1px solid #444; }
.nav { width: 41px; height: 38px; }
.st { height: 24px; margin-top: 8px; padding: 0 15px; font-size: 16px; border-right: 1px solid #555; }
.first { margin-left: 40px; }
.active { height: 35px; margin: 0 5px; padding: 0 10px 2px; background: #fff; color: #333; border: 0; border-radius: 0 0 5px 5px; font-weight: 600; }
.active span { border-bottom: 2px solid #217346; line-height: 26px; }
.bar { width: 1px; height: 24px; margin-top: 8px; background: #555; }
.add { width: 40px; height: 38px; margin-left: 38px; }
.hscroll { width: 739px; margin: 13px 26px 0 auto; height: 13px; display: flex; align-items: center; }
.hscroll .track { flex: 1; height: 11px; margin: 0 36px 0 5px; border-radius: 6px; background: #9a9a9a; }
.left, .right { width: 10px; height: 12px; background: #9a9a9a; }
.left { margin-left: 25px; clip-path: polygon(100% 0, 100% 100%, 0 50%); }
.right { clip-path: polygon(0 0, 0 100%, 100% 50%); }

/* status bar */
.status { flex: none; height: 27px; display: flex; align-items: center; padding: 0 11px 0 14px; background: #141414; font-size: 13px; }
.views { margin-left: auto; display: flex; }
.views button { width: 50px; height: 27px; }
.views .on { background: #222; }
.zb { width: 22px; height: 27px; }
.zoom { width: 125px; height: 16px; appearance: none; background: linear-gradient(#777, #777) 0 8px / 100% 1px no-repeat; }
.zoom::-webkit-slider-thumb { appearance: none; width: 6px; height: 15px; background: #aaa; }
.pc { width: 42px; text-align: right; font-size: 12px; }

/* taskbar */
.taskbar { flex: none; height: 50px; display: flex; background: linear-gradient(90deg, #1e1d26, #1e1d28 45%, #241e3c 62%, #201f3d 75%, #1a1e33); }
.start { width: 60px; background: #202024; }
.tsearch { width: 360px; display: flex; align-items: center; padding: 0 11px 0 14px; gap: 14px; background: #333; border: 1px solid #555; color: #d0d0d0; font-size: 18px; }
.tsearch input { flex: 1; }
.app { width: 62px; }
.tv { width: 60px; margin-right: 3px; }
.run { background: linear-gradient(#76abe0, #76abe0) center bottom / 51px 3px no-repeat; }
.focus { background: linear-gradient(#76abe0, #76abe0) center bottom / 100% 3px no-repeat, #4b4959; }
.alert { background: linear-gradient(#f97a12, #f97a12) center bottom / 100% 3px no-repeat, #a65d2a; }
.tray { margin: 0 5px 0 auto; display: flex; align-items: center; padding-right: 16px; border-right: 1px solid #666; }
.tray button { width: 30px; height: 50px; }
.tray .weather { width: auto; gap: 9px; font-size: 17px; margin-right: 24px; }
.tray .clock { width: 86px; font-size: 14px; line-height: 23px; }
.tray .note { width: 30px; margin-left: 12px; }

/* tracker overlay */
.widget { position: absolute; right: 24px; bottom: 65px; width: 195px; padding: 4px 0 2px 5px; background: #171717; opacity: .76; display: flex; flex-direction: column; gap: 2px; color: #fff; }
.widget button { align-self: flex-end; width: 86px; height: 25px; gap: 4px; font-size: 14px; background: #2c2c2c; margin-bottom: 8px; }
.widget p { margin: 0; height: 34px; padding-left: 13px; line-height: 34px; font-size: 14px; font-weight: 700; }
.blue { background: #55b9c4; }
.green { background: #2ecc71; }
.red { background: #e74c3c; }
```
FILE: script.js
```js
// The last column has no heading: only its left part is in view.
const columns = [...'ABCDEFGHIJKLMNOPQRSTUVW', ''];
const data = [
  ['Order ID', 'User-name', 'Username', 'Account'],
  ['114-54298', 'Waleed-ur-Rahman', 'Waleed', 'Tech', 'SY_347334'],
  ['', 'Waleed-ur-Rahman', 'Alfie', 'Tech'],
  ['', 'Musharraf', 'Kylie', 'Tech'],
  ['', 'Musharraf', 'Emmanuel', 'Tech']
];
const table = document.querySelector('.gridtable');

const head = table.tHead.insertRow();
head.innerHTML = '<th><span class="corner"></span></th>' +
  columns.map((c) => `<th${c === 'B' ? ' class="hot"' : ''}>${c}</th>`).join('');

for (let r = 0; r < 28; r++) {
  const row = table.tBodies[0].insertRow();
  row.innerHTML = `<th${r === 1 ? ' class="hot"' : ''}>${r + 1}</th>` + columns.map((c, i) => {
    const text = (data[r] || [])[i] || '';
    if (r === 1 && c === 'B') return `<td class="sel"><span>${text}</span></td>`;
    return `<td${r === 1 && c === 'E' ? ' class="spill"' : ''}>${text}</td>`;
  }).join('');
}
```
